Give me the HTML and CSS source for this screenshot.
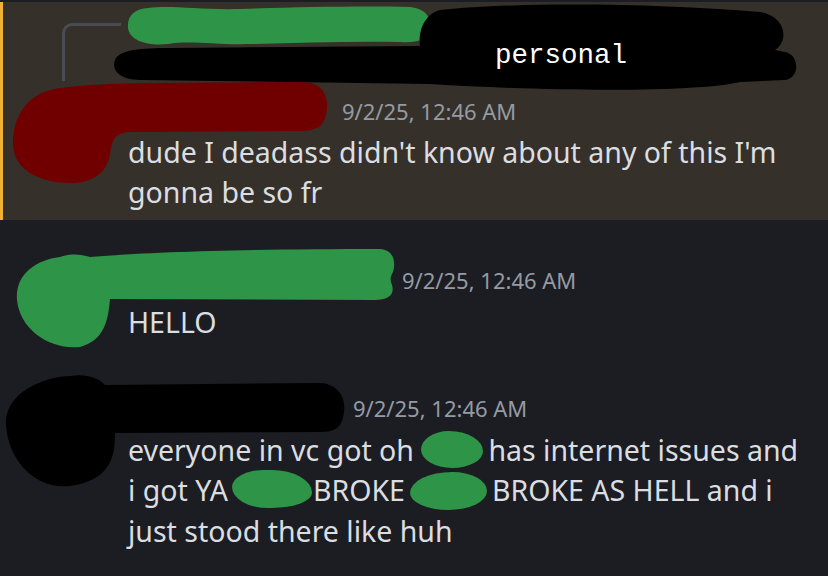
FILE: index.html
```html
<!DOCTYPE html>
<html lang="en">
<head>
    <meta charset="UTF-8" />
    <meta name="viewport" content="width=828, height=576" />
    <title>Chat</title>
    <link rel="stylesheet" href="styles.css">
</head>
<body>
    <div class="chat">
        <div class="msg mention">
            <div class="reply">
                <div class="spine"></div>
            </div>
            <div class="avatar"></div>
            <div class="content">
                <div class="head"><span class="name n1"></span><time>9/2/25, 12:46 AM</time></div>
                <div class="text">dude I deadass didn't know about any of this I'm gonna be so fr</div>
            </div>
        </div>

        <div class="msg msg-2">
            <div class="avatar"></div>
            <div class="content">
                <div class="head"><span class="name n2"></span><time>9/2/25, 12:46 AM</time></div>
                <div class="text">HELLO</div>
            </div>
        </div>

        <div class="msg msg-3">
            <div class="avatar"></div>
            <div class="content">
                <div class="head"><span class="name n3"></span><time>9/2/25, 12:46 AM</time></div>
                <div class="text">everyone in vc got oh <span class="blot blot-a"></span>has internet issues and i got YA<span class="blot blot-b"></span>BROKE<span class="blot blot-c"></span>BROKE AS HELL and i just stood there like huh</div>
            </div>
        </div>
    </div>

    <!-- redaction scribbles drawn over the screenshot -->
    <svg class="marks" viewBox="0 0 828 576" xmlns="http://www.w3.org/2000/svg">
        <path class="ink-green" d="M148,8 C170,5 200,10 240,9 C300,7 360,6 410,7 C425,8 432,18 430,28 C428,40 418,43 400,42 C350,41 300,43 250,44 C215,45 190,40 168,44 C150,46 130,42 128,28 C127,15 135,9 148,8 Z" />
        <path class="ink-black" d="M440,10 C520,2 650,3 760,12 C785,16 790,40 775,50 L785,52 C800,55 800,78 785,80 L740,82 C700,92 560,92 430,84 L140,80 C118,80 110,68 116,58 C122,50 140,48 170,48 L420,46 C418,30 425,14 440,10 Z" />
        <text class="scrawl" x="495" y="63">personal</text>
        <path class="ink-red" d="M60,88 C90,84 110,84 140,83 L300,82 C320,82 328,92 327,108 C326,125 318,131 300,131 L130,132 C114,133 112,140 110,155 C106,175 90,183 70,183 C40,183 14,170 13,145 C12,120 25,92 60,88 Z" />
        <path class="ink-green" d="M60,257 C75,252 85,256 90,257 C150,252 250,249 380,249 C394,250 396,262 393,272 C390,277 390,280 392,285 C395,295 388,300 375,300 L110,299 C108,320 105,340 80,347 C50,350 20,330 17,300 C15,275 35,260 60,257 Z" />
        <path class="ink-black" d="M70,376 C90,373 100,380 105,385 L320,383 C340,384 346,400 344,412 C342,428 335,432 320,432 L115,433 C115,455 112,480 70,486 C35,490 8,460 6,425 C4,395 40,377 70,376 Z" />
    </svg>
</body>
</html>
```

FILE: styles.css
```css
:root {
    --bg: #1c1d22;
    --mention-bg: #36302a;
    --mention-bar: #f0b232;
    --spine: #4a4c54;
    --text: #dbdee1;
    --muted: #949ba4;
    --green: #2e9447;
    --red: #700000;
}

* {
    box-sizing: border-box;
}

body {
    margin: 0;
    width: 828px;
    height: 576px;
    overflow: hidden;
    position: relative;
    background-color: var(--bg);
    color: var(--text);
    font-family: "Noto Sans", sans-serif;
}

.chat {
    padding-top: 2px;
}

.msg {
    display: grid;
    grid-template-columns: 128px 1fr;
    padding-right: 25px;
}

.mention {
    background-color: var(--mention-bg);
    box-shadow: inset 3px 0 var(--mention-bar);
    padding-bottom: 7px;
}

.msg-2 {
    padding-top: 46.5px;
}

.msg-3 {
    padding-top: 52px;
}

.reply {
    grid-column: 1 / -1;
    height: 94.5px;
    padding-left: 62px;
    display: flex;
}

.spine {
    width: 59px;
    height: 58px;
    margin-top: 21px;
    border-left: 3px solid var(--spine);
    border-top: 3px solid var(--spine);
    border-top-left-radius: 10px;
}

.avatar {
    width: 72px;
    height: 72px;
    margin: 4px 0 0 28px;
    border-radius: 50%;
    background-color: #3f4147;
}

.head {
    font-size: 22px;
    line-height: 28px;
    margin-bottom: 7.4px;
    white-space: nowrap;
}

.name {
    display: inline-block;
}

.n1 { width: 214px; }
.n2 { width: 274px; }
.n3 { width: 225px; }

time {
    color: var(--muted);
}

.text {
    font-size: 28.5px;
    line-height: 40.5px;
}

.blot {
    display: inline-block;
    background-color: var(--green);
    vertical-align: -7px;
}

.blot-a {
    width: 62px;
    height: 37px;
    margin-right: 5px;
    border-radius: 45% 55% 50% 50% / 50% 55% 45% 50%;
}

.blot-b {
    width: 80px;
    height: 38px;
    margin: 0 1px 0 4px;
    border-radius: 40% 50% 50% 45% / 45% 60% 40% 55%;
}

.blot-c {
    width: 77px;
    height: 38px;
    margin: 0 5px;
    vertical-align: -8.5px;
    border-radius: 55% 45% 50% 50% / 55% 50% 50% 45%;
}

.marks {
    position: absolute;
    left: 0;
    top: 0;
    width: 828px;
    height: 576px;
    pointer-events: none;
}

.ink-green { fill: var(--green); }
.ink-red { fill: var(--red); }
.ink-black { fill: #000; }

.scrawl {
    font-family: "Liberation Mono", monospace;
    font-size: 27.5px;
    fill: #fff;
}
```
